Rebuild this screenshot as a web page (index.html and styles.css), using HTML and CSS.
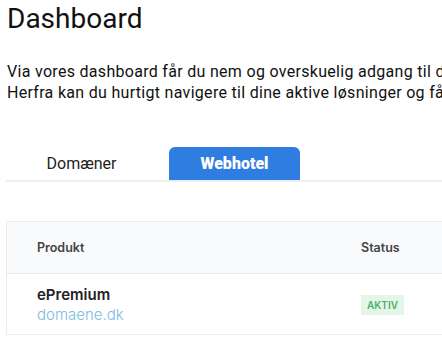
FILE: index.html
```html
<!DOCTYPE html>
<html lang="da">
<head>
  <meta name="viewport" content="width=device-width, initial-scale=1.0">
  <title>Dashboard</title>
  <link rel="stylesheet" href="styles.css">
</head>
<body>
  <div class="page">
    <h1>Dashboard</h1>
    <p class="intro">
      Via vores dashboard får du nem og overskuelig adgang til dine produkter.<br>
      Herfra kan du hurtigt navigere til dine aktive løsninger og få overblik.
    </p>

    <!-- faner -->
    <ul class="tabs">
      <li class="tab">Domæner</li>
      <li class="tab active">Webhotel</li>
    </ul>

    <!-- produkttabel -->
    <div class="table-wrap">
      <table class="products">
        <thead>
          <tr>
            <th class="col-product">Produkt</th>
            <th class="col-status">Status</th>
          </tr>
        </thead>
        <tbody>
          <tr>
            <td class="col-product">
              <div class="name">ePremium</div>
              <a class="domain" href="#">domaene.dk</a>
            </td>
            <td class="col-status"><span class="badge">AKTIV</span></td>
          </tr>
        </tbody>
      </table>
    </div>
  </div>
</body>
</html>
```

FILE: styles.css
```css
body {
  margin: 0;
  font-family: Roboto, "Open Sans", sans-serif;
  color: #111;
  background: #fff;
  overflow: hidden;
}
.page {
  padding: 0 0 0 7px;
  width: 700px;
}
h1 {
  font-size: 28px;
  font-weight: 400;
  margin: 3px 0 0;
  line-height: 32px;
}
.intro {
  font-size: 16px;
  line-height: 21px;
  letter-spacing: 0.3px;
  margin: 26px 0 0;
  white-space: nowrap;
}
.tabs {
  list-style: none;
  margin: 44px 0 0 -1px;
  padding: 0;
  display: flex;
  border-bottom: 2px solid #eeeeee;
}
.tab {
  width: 131px;
  margin-left: 10px;
  height: 33px;
  line-height: 33px;
  text-align: center;
  font-size: 16px;
  color: #222;
  border-radius: 6px 6px 0 0;
}
.tab.active {
  margin-left: 22px;
  background-color: #2f7de1;
  color: #fff;
  font-weight: 900;
}
.table-wrap {
  margin: 39px 0 0 -1px;
  border: 1px solid #ececec;
  border-right: none;
}
.products {
  width: 100%;
  border-collapse: collapse;
  font-family: Inter, "Open Sans", sans-serif;
}
.products th {
  background: #f9fafb;
  height: 51px;
  padding-top: 0;
  padding-bottom: 0;
  text-align: left;
  font-size: 12.5px;
  font-weight: 600;
  color: #444;
  border-bottom: 1px solid #ececec;
}
.products td {
  height: 60px;
  padding-top: 0;
  padding-bottom: 0;
  vertical-align: middle;
}
.col-product {
  padding-left: 30px;
  width: 323px;
}
.col-status {
  padding: 0;
}
.name {
  font-size: 15px;
  font-weight: 600;
  color: #222;
}
.domain {
  font-size: 15px;
  font-weight: 300;
  color: #7dbbe0;
  text-decoration: none;
}
.badge {
  display: inline-block;
  background: #e3f6e8;
  color: #4caf6a;
  font-size: 10px;
  font-weight: 600;
  padding: 5px 6px;
  line-height: 10px;
}
```
